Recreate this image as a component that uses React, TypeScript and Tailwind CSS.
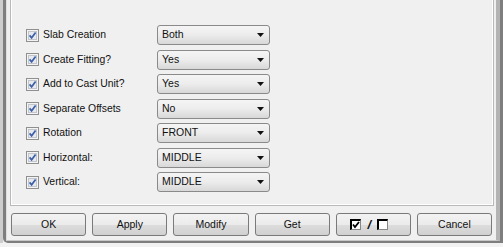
import React from 'react'

const rows = [
  { label: 'Slab Creation', value: 'Both' },
  { label: 'Create Fitting?', value: 'Yes' },
  { label: 'Add to Cast Unit?', value: 'Yes' },
  { label: 'Separate Offsets', value: 'No' },
  { label: 'Rotation', value: 'FRONT' },
  { label: 'Horizontal:', value: 'MIDDLE' },
  { label: 'Vertical:', value: 'MIDDLE' },
]

function CheckBox() {
  return (
    <svg width="13" height="13" viewBox="0 0 13 13" className="shrink-0">
      <rect x="0.5" y="0.5" width="12" height="12" fill="#f4f4f4" stroke="#8f8f8f" />
      <rect x="2.5" y="2.5" width="8" height="8" fill="#e6e9ee" stroke="#c2c6cc" />
      <path d="M3.6 6.4 L5.6 8.8 L9.6 3.4" fill="none" stroke="#3d5fa8" strokeWidth="1.7" />
    </svg>
  )
}

function Dropdown({ value }: { value: string }) {
  return (
    <div className="w-[113px] h-[20px] flex items-center justify-between pl-[4px] pr-[5px] rounded-[3px] border border-[#8a8a8a] bg-gradient-to-b from-[#f5f5f5] via-[#ececec] to-[#d8d8d8] text-[10.5px] text-[#111]">
      <span>{value}</span>
      <svg width="7" height="4" viewBox="0 0 7 4">
        <path d="M0 0 H7 L3.5 4 Z" fill="#111" />
      </svg>
    </div>
  )
}

function Button({ children }: { children: React.ReactNode }) {
  return (
    <div className="flex-1 h-[23px] flex items-center justify-center rounded-[3px] border border-[#7a7a7a] bg-[linear-gradient(#f3f3f3_0%,#ebebeb_50%,#dddddd_51%,#d0d0d0_100%)] text-[10.5px] text-[#111]">
      {children}
    </div>
  )
}

function TickBox({ checked }: { checked?: boolean }) {
  return (
    <span className="w-[11px] h-[11px] border-l-2 border-t-2 border-r border-b border-l-black border-t-black border-r-[#888] border-b-[#888] bg-white flex items-center justify-center">
      {checked && (
        <svg width="8" height="8" viewBox="0 0 8 8">
          <path d="M1 3.5 L3 6 L7 1" fill="none" stroke="#000" strokeWidth="1.8" />
        </svg>
      )}
    </span>
  )
}

export default function App() {
  return (
    <div className="w-[503px] h-[247px] bg-[#f2f2f2] font-['Liberation_Sans',Arial,sans-serif] overflow-hidden">
      <div className="h-[243px] border-l-[3px] border-l-[#cdcdcd]">
        <div className="h-full border-l-[3px] border-r-[3px] border-b-[2px] border-[#7e7e7e] rounded-bl-[5px]">
          <div className="h-full border-l border-r-[4px] border-b border-l-[#dcdcdc] border-r-[#b4b4b4] border-b-[#c8c8c8] bg-[#f0f0f0] flex flex-col">
            <div className="flex-1 flex pl-[3px] pr-[2px]">
              <div className="flex-1 h-[206px] border-l border-r border-b border-[#b9b9b9] bg-[#f0f0f0]">
                <div className="h-full border-l border-r border-b border-white pt-[25px]">
                  {rows.map((r) => (
                    <div key={r.label} className="h-[24.5px] flex items-start">
                      <div className="w-[145px] flex items-center pl-[14px] gap-[3px] h-[20px]">
                        <CheckBox />
                        <span className="text-[10.4px] text-[#111] pl-[1px]">{r.label}</span>
                      </div>
                      <Dropdown value={r.value} />
                    </div>
                  ))}
                </div>
              </div>
            </div>
            <div className="flex gap-[6px] pl-[4px] pr-[4px] pb-[4px] pt-[7px]">
              <Button>OK</Button>
              <Button>Apply</Button>
              <Button>Modify</Button>
              <Button>Get</Button>
              <Button>
                <span className="flex items-center gap-[6px] -translate-x-[4px]">
                  <TickBox checked />
                  <span className="font-bold italic text-[13px] leading-none">/</span>
                  <TickBox />
                </span>
              </Button>
              <Button>Cancel</Button>
            </div>
          </div>
        </div>
      </div>
    </div>
  )
}
